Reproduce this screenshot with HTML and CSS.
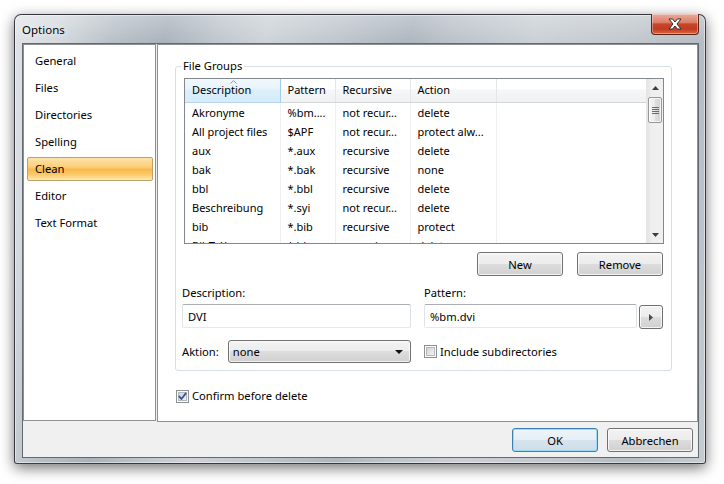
FILE: index.html
```html
<!DOCTYPE html>
<html>
<head>
<meta charset="utf-8">
<title>Options</title>
<link rel="stylesheet" href="styles.css">
</head>
<body>
<div class="desk">
  <div class="window">
    <div class="titlebar">
      <span class="title">Options</span>
      <button class="close" type="button" aria-label="Close">
        <svg width="14" height="12" viewBox="0 0 14 12"><polygon points="1,1 4.6,1 7,4 9.4,1 13,1 9,6 13,11 9.4,11 7,8 4.6,11 1,11 5,6" fill="#fff" stroke="#2f2f2f" stroke-width="1" stroke-linejoin="round"/></svg>
      </button>
    </div>
    <div class="client">
      <div class="main">
        <ul class="nav">
          <li class="nav-item">General</li>
          <li class="nav-item">Files</li>
          <li class="nav-item">Directories</li>
          <li class="nav-item">Spelling</li>
          <li class="nav-item selected">Clean</li>
          <li class="nav-item">Editor</li>
          <li class="nav-item">Text Format</li>
        </ul>
        <div class="page">
          <fieldset class="group">
            <legend class="legend">File Groups</legend>
            <div class="listview">
              <div class="lv-main">
                <table class="lv-table">
                  <colgroup><col class="c1"><col class="c2"><col class="c3"><col class="c4"><col></colgroup>
                  <thead>
                    <tr>
                      <th class="sorted">Description<svg class="sort-arrow" width="7" height="4" viewBox="0 0 7 4"><polyline points="0.5,3.5 3.5,0.5 6.5,3.5" fill="none" stroke="#8d9aac" stroke-width="1"/></svg></th>
                      <th>Pattern</th>
                      <th>Recursive</th>
                      <th>Action</th>
                      <th class="last"></th>
                    </tr>
                  </thead>
                  <tbody>
                    <tr><td>Akronyme</td><td>%bm....</td><td>not recur...</td><td>delete</td><td></td></tr>
                    <tr><td>All project files</td><td>$APF</td><td>not recur...</td><td>protect alw...</td><td></td></tr>
                    <tr><td>aux</td><td>*.aux</td><td>recursive</td><td>delete</td><td></td></tr>
                    <tr><td>bak</td><td>*.bak</td><td>recursive</td><td>none</td><td></td></tr>
                    <tr><td>bbl</td><td>*.bbl</td><td>recursive</td><td>delete</td><td></td></tr>
                    <tr><td>Beschreibung</td><td>*.syi</td><td>not recur...</td><td>delete</td><td></td></tr>
                    <tr><td>bib</td><td>*.bib</td><td>recursive</td><td>protect</td><td></td></tr>
                    <tr><td>BibTeX</td><td>*.blg</td><td>recursive</td><td>delete</td><td></td></tr>
                  </tbody>
                </table>
              </div>
              <div class="scrollbar">
                <div class="sb-btn"><svg width="7" height="4" viewBox="0 0 7 4"><polygon points="0,4 3.5,0 7,4" fill="#3d3d3d"/></svg></div>
                <div class="sb-thumb"><svg width="7" height="7" viewBox="0 0 7 7"><path d="M0 0.5H7M0 2.5H7M0 4.5H7M0 6.5H7" stroke="#6a6a6a" stroke-width="1"/></svg></div>
                <div class="sb-track"></div>
                <div class="sb-btn"><svg width="7" height="4" viewBox="0 0 7 4"><polygon points="0,0 7,0 3.5,4" fill="#3d3d3d"/></svg></div>
              </div>
            </div>
            <div class="btnrow">
              <button class="btn" type="button">New</button>
              <button class="btn" type="button">Remove</button>
            </div>
            <div class="fields">
              <div class="field">
                <div class="label">Description:</div>
                <input class="input desc" type="text" value="DVI" readonly>
              </div>
              <div class="field">
                <div class="label">Pattern:</div>
                <div class="pattern-row">
                  <input class="input pat" type="text" value="%bm.dvi" readonly>
                  <button class="btn arrow-btn" type="button" aria-label="More"><svg width="4" height="7" viewBox="0 0 4 7"><polygon points="0,0 4,3.5 0,7" fill="#4a4a4a"/></svg></button>
                </div>
              </div>
              <div class="aktion-row">
                <span class="aktion-label">Aktion:</span>
                <div class="combo"><span class="combo-text">none</span><svg width="8" height="4" viewBox="0 0 8 4"><polygon points="0,0 8,0 4,4" fill="#111"/></svg></div>
              </div>
              <label class="check sub">
                <svg class="cb" width="13" height="13" viewBox="0 0 13 13"><defs><linearGradient id="cbg1" x1="0" y1="0" x2="1" y2="1"><stop offset="0" stop-color="#cbcfd5"/><stop offset="1" stop-color="#f7f7f7"/></linearGradient></defs><rect x="0.5" y="0.5" width="12" height="12" fill="#fdfdfd" stroke="#8e8f8f"/><rect x="2.5" y="2.5" width="8" height="8" fill="url(#cbg1)" stroke="#b3b8be"/></svg>
                <span>Include subdirectories</span>
              </label>
            </div>
          </fieldset>
          <label class="check confirm">
            <svg class="cb" width="13" height="13" viewBox="0 0 13 13"><defs><linearGradient id="cbg2" x1="0" y1="0" x2="1" y2="1"><stop offset="0" stop-color="#cbcfd5"/><stop offset="1" stop-color="#f7f7f7"/></linearGradient></defs><rect x="0.5" y="0.5" width="12" height="12" fill="#fdfdfd" stroke="#8e8f8f"/><rect x="2.5" y="2.5" width="8" height="8" fill="url(#cbg2)" stroke="#b3b8be"/><path d="M3.2 6.4 L5.4 9 L9.8 3.4" fill="none" stroke="#3e5594" stroke-width="1.8" stroke-linecap="round" stroke-linejoin="round"/></svg>
            <span>Confirm before delete</span>
          </label>
        </div>
      </div>
      <div class="footer">
        <button class="btn default" type="button">OK</button>
        <button class="btn" type="button">Abbrechen</button>
      </div>
    </div>
  </div>
</div>
</body>
</html>
```
FILE: styles.css
```css
* { box-sizing: border-box; }
html, body { margin: 0; padding: 0; background: #fff; }
body {
  width: 724px; height: 484px; overflow: hidden;
  font-family: "Noto Sans", "Open Sans", sans-serif;
  font-size: 11px; color: #000;
}
.desk { padding: 14px 0 0 14px; }
.window {
  width: 692px; height: 450px;
  border: 1px solid rgba(28, 32, 38, 0.85);
  border-radius: 7px 7px 3px 3px;
  padding: 0 6px 5px 7px;
  display: flex; flex-direction: column;
  background:
    linear-gradient(rgba(255,255,255,0.28), rgba(255,255,255,0) 28px),
    linear-gradient(100deg, #e0e4e8 0%, #d4d9de 6%, #b9c1c8 13%, #a9b2bb 20%, #bfc6cd 27%, #cdd3d8 33%, #bfc6cd 42%, #adb5be 52%, #bac1c8 57%, #cad0d6 68%, #c2c8ce 80%, #b5bcc4 90%, #c6ccd2 100%);
  box-shadow: 0 4px 14px rgba(0,0,0,0.55), inset 0 0 0 1px rgba(255,255,255,0.45);
}
.titlebar {
  flex: none; height: 28px;
  display: flex; justify-content: space-between; align-items: flex-start;
}
.title { padding-top: 7px; line-height: 16px; font-size: 11.5px; color: #000; text-shadow: 0 0 6px rgba(255,255,255,0.9); }
.close {
  width: 48px; height: 21px; margin-top: -1px; padding: 0;
  border: 1px solid #5e2418; border-top: none; border-radius: 0 0 4px 4px;
  background: linear-gradient(#eaaa9c 0%, #dc8069 42%, #c9462b 50%, #c33b20 75%, #d8673f 100%);
  box-shadow: inset 0 0 0 1px rgba(255,255,255,0.35);
  display: flex; align-items: center; justify-content: center;
}
.client {
  flex: 1; display: flex; flex-direction: column;
  background: #f0f0f0; border: 1px solid #626970;
}
.main { display: flex; gap: 1px; align-items: flex-start; }
.nav {
  width: 133px; height: 377px; margin: 0; padding: 4px 2px 0 3px; list-style: none;
  background: #fff; border: 1px solid #8d9093;
}
.nav-item {
  height: 24px; margin-bottom: 3px; padding-left: 7px;
  border: 1px solid transparent; line-height: 22px; font-size: 11.2px;
}
.nav-item.selected {
  border-color: #c0a06c; border-radius: 2px;
  background: linear-gradient(#fde3aa 0%, #fbcf7a 40%, #f9b84b 52%, #fbc96a 75%, #feebb0 100%);
}
.page {
  width: 541px; height: 378px; background: #fff; border: 1px solid #8d9093;
}
.group {
  width: 497px; margin: 13px 0 0 17px; padding: 0 7px 7px 8px;
  border: 1px solid #d5dfe5; border-radius: 3px; min-width: 0;
}
.legend { padding: 0 2px; margin-left: -3px; line-height: 16px; font-size: 11.2px; }
.listview {
  display: flex; width: 480px; height: 166px; margin-top: 4px;
  border: 1px solid #828790; background: #fff;
}
.lv-main { flex: 1; overflow: hidden; }
.lv-table { border-collapse: collapse; table-layout: fixed; width: 461px; }
.c1 { width: 95px; } .c2 { width: 55px; } .c3 { width: 75px; } .c4 { width: 86px; }
.lv-table th {
  position: relative; height: 23px; padding: 0 0 0 7px;
  font-weight: normal; text-align: left; line-height: 22px; white-space: nowrap;
  border-right: 1px solid #e3e5e8; border-bottom: 1px solid #d5d5d5;
  background: linear-gradient(#ffffff 0%, #ffffff 45%, #f5f6f7 46%, #f0f1f3 100%);
}
.lv-table th.last { border-right: none; }
.lv-table th.sorted {
  background: linear-gradient(#f0f8fd 0%, #e6f3fc 45%, #dceffb 46%, #d6ecfa 100%);
  border-right: 1px solid #a5cde9; border-bottom-color: #b8d7ee;
}
.sort-arrow { position: absolute; left: 45px; top: 1px; }
.lv-table td {
  height: 19px; padding: 0 0 0 7px; line-height: 19px;
  white-space: nowrap; overflow: hidden;
  border-right: 1px solid #edf0f4;
}
.lv-table td:last-child { border-right: none; }
.scrollbar {
  width: 17px; flex: none; display: flex; flex-direction: column;
  background: linear-gradient(to right, #e4e4e4 0%, #efefef 30%, #f0f0f0 100%);
  border-left: 1px solid #e6e6e6;
}
.sb-btn { height: 17px; flex: none; display: flex; align-items: center; justify-content: center; }
.sb-thumb {
  height: 26px; margin: 1px 1px 0 1px; flex: none;
  border: 1px solid #979797; border-radius: 2px;
  background: linear-gradient(to right, #f4f4f4 0%, #ebebeb 50%, #dedede 51%, #d2d2d2 100%);
  box-shadow: inset 0 0 0 1px rgba(255,255,255,0.7);
  display: flex; align-items: center; justify-content: center;
}
.sb-track { flex: 1; }
.btnrow { display: flex; justify-content: flex-end; gap: 14px; margin-top: 8px; padding-right: 1px; }
.btn {
  font-family: inherit; font-size: 11.2px; color: #000;
  width: 86px; height: 24px; padding: 0;
  border: 1px solid #707070; border-radius: 3px;
  background: linear-gradient(#f3f3f3 0%, #ececec 48%, #dddddd 50%, #d0d0d0 100%);
  box-shadow: inset 0 0 0 1px rgba(255,255,255,0.75);
}
.fields {
  display: grid; grid-template-columns: 229px 239px; column-gap: 13px;
  margin-left: -2px; margin-top: 9px;
}
.field { display: flex; flex-direction: column; }
.label { line-height: 16px; height: 16px; margin-bottom: 3px; font-size: 11.2px; }
.input {
  font-family: inherit; font-size: 11.2px; color: #000;
  height: 24px; padding: 0 0 0 5px; margin: 0;
  border: 1px solid; border-color: #abadb3 #dbdfe6 #e3e9ef #e2e3ea; border-radius: 2px;
  background: #fff; outline: none;
}
.desc { width: 229px; }
.pattern-row { display: flex; gap: 2px; align-items: flex-start; }
.pat { width: 213px; }
.arrow-btn { width: 24px; height: 24px; margin-top: 1px; display: flex; align-items: center; justify-content: center; }
.aktion-row { display: flex; align-items: center; margin-top: 11px; }
.aktion-label { width: 46px; font-size: 11.2px; }
.combo {
  width: 184px; height: 23px; padding: 0 7px 0 4px;
  display: flex; align-items: center; justify-content: space-between;
  border: 1px solid #707070; border-radius: 3px;
  background: linear-gradient(#f3f3f3 0%, #ececec 48%, #dddddd 50%, #d0d0d0 100%);
  box-shadow: inset 0 0 0 1px rgba(255,255,255,0.75);
  font-size: 11.2px;
}
.check { display: flex; align-items: center; gap: 3px; line-height: 16px; font-size: 11.2px; }
.check .cb { flex: none; }
.check.sub { margin-top: 11px; height: 23px; }
.check.confirm { margin: 17px 0 0 18px; }
.footer { display: flex; justify-content: flex-end; gap: 9px; padding: 6px 5px 0 0; }
.footer .btn { width: 86px; }
.btn.default {
  border-color: #3c7fb1;
  background: linear-gradient(#eef5f9 0%, #e5eff5 48%, #d6e4ed 50%, #cddde8 100%);
  box-shadow: inset 0 0 0 1px #9fdaf5;
}
```
